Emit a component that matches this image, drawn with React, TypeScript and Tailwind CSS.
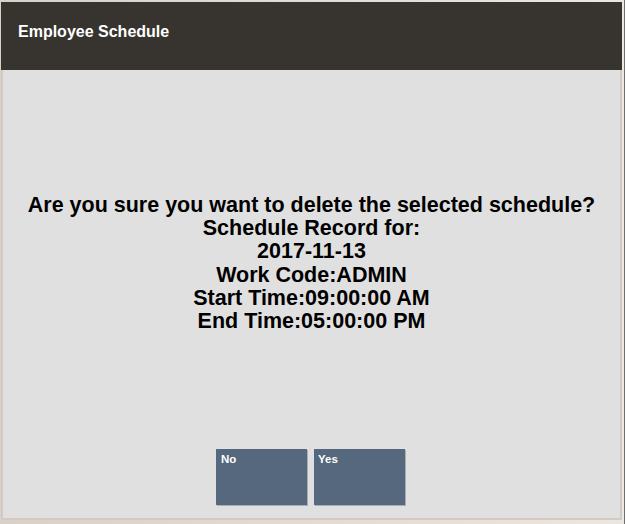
import React from "react";

export default function App() {
  const font = { fontFamily: '"Liberation Sans", Arial, sans-serif' };
  return (
    <div className="w-[625px] h-[524px] bg-[#ece9e6] flex" style={font}>
      <div className="flex-1 flex flex-col pt-[2px] pl-[1px] pr-[1px] pb-[4px] bg-[linear-gradient(90deg,#d9d0c8,#ece6e0)]">
        <div className="flex-1 flex flex-col bg-[#e0e0e0] border-l-[2px] border-b-[2px] border-r-[2px] border-[#d3cbc3]">
          <div className="h-[68px] bg-[#37332f] flex items-center pl-[17px] pb-[9px] -mx-[2px]">
            <span className="text-white font-bold text-[16px]">Employee Schedule</span>
          </div>
          <div className="flex-1 flex flex-col items-center">
            <div className="mt-[124px] flex flex-col items-center text-black font-bold text-[21.5px] leading-[23.2px] text-center whitespace-nowrap">
              <div>Are you sure you want to delete the selected schedule?</div>
              <div>Schedule Record for:</div>
              <div>2017-11-13</div>
              <div>Work Code:ADMIN</div>
              <div>Start Time:09:00:00 AM</div>
              <div>End Time:05:00:00 PM</div>
            </div>
            <div className="mt-[116px] flex gap-[7px] mr-[2px]">
              <button className="w-[91px] h-[56px] bg-[#55687d] text-white font-bold text-[11.5px] text-left flex items-start px-[5px] py-[2px] shadow-[1px_1px_0_#a8adb3]">
                No
              </button>
              <button className="w-[91px] h-[56px] bg-[#55687d] text-white font-bold text-[11.5px] text-left flex items-start px-[4px] py-[2px] shadow-[1px_1px_0_#a8adb3]">
                Yes
              </button>
            </div>
          </div>
        </div>
      </div>
      <div className="w-[1px] h-full bg-[#ebe8e5]" />
      <div className="w-[1px] h-full bg-[#6f6f6f]" />
    </div>
  );
}
